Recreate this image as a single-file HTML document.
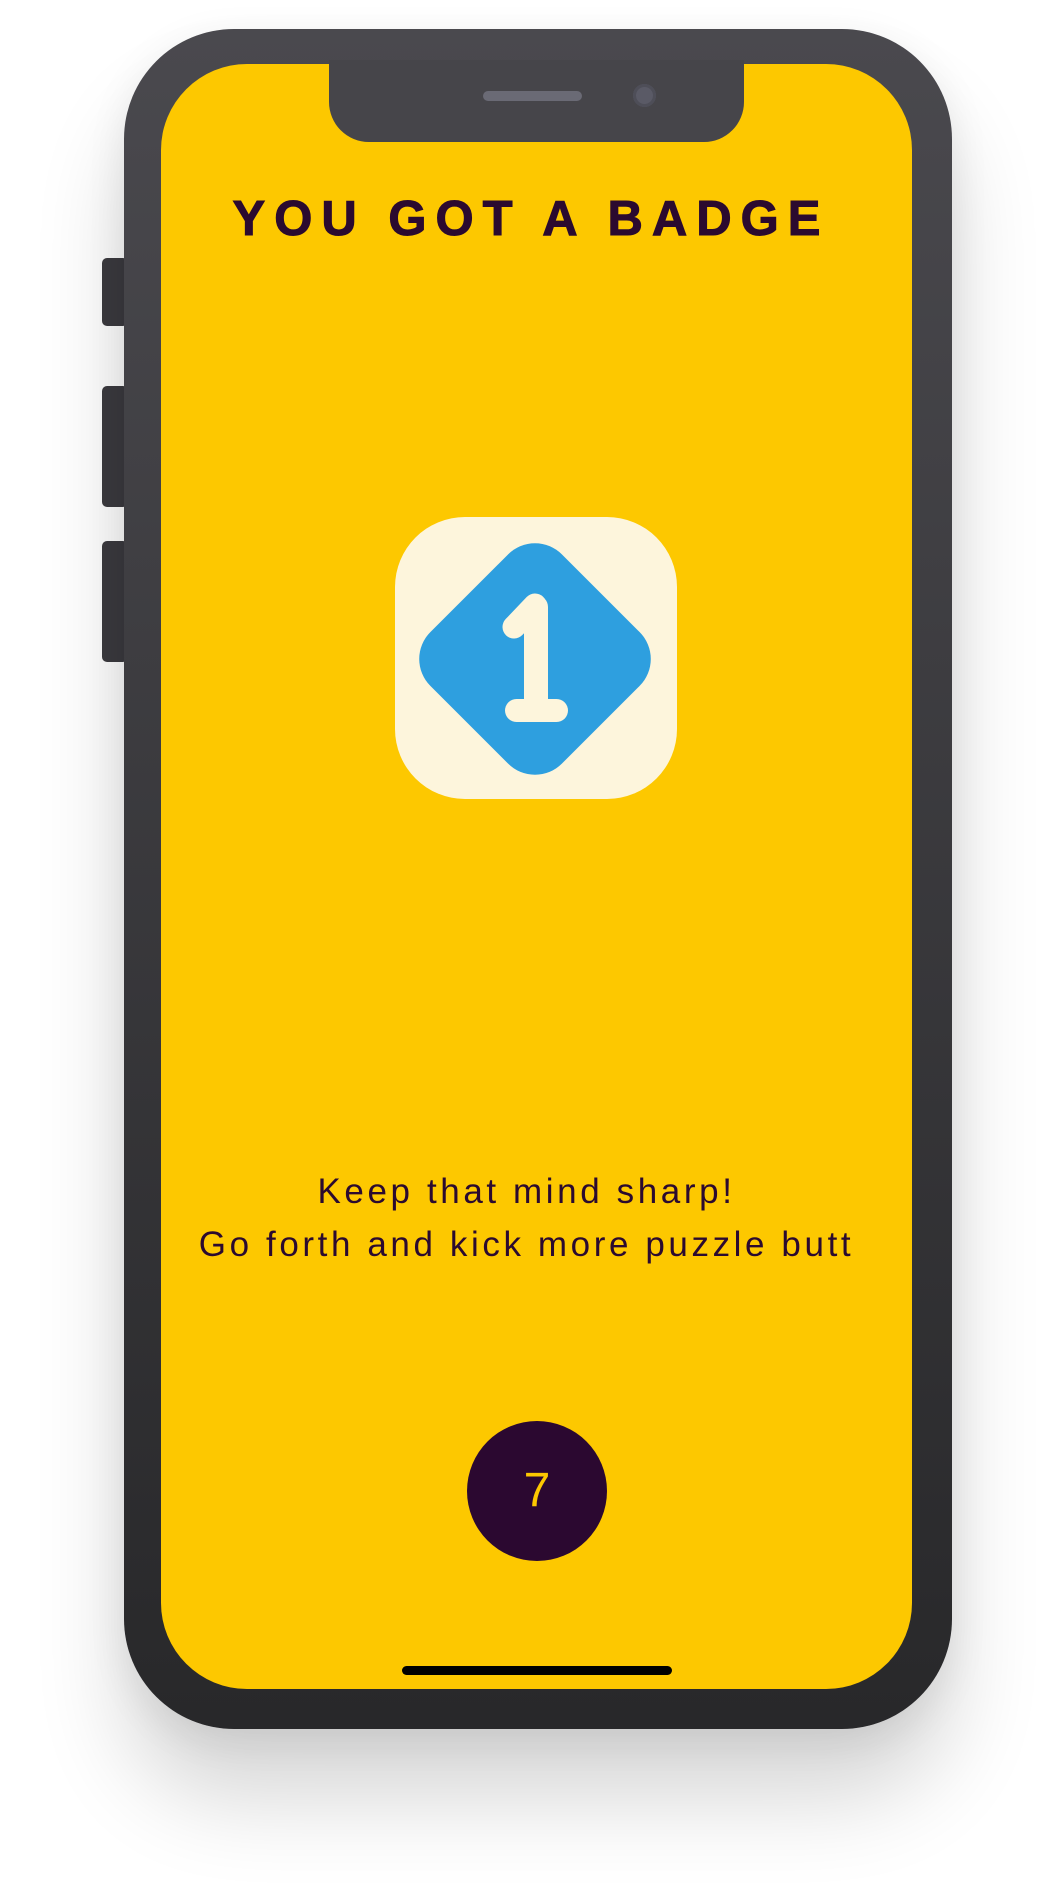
<!DOCTYPE html>
<html><head><style>
html,body{margin:0;padding:0;width:1053px;height:1903px;background:#fff;overflow:hidden;position:relative;font-family:"Liberation Sans",sans-serif}
.btn{position:absolute;left:102px;width:26px;background:#3c3b40;border-radius:5px}
.phone{position:absolute;left:124px;top:29px;width:828px;height:1700px;border-radius:110px;background:linear-gradient(#4a494e,#28282a);box-shadow:0 70px 90px rgba(0,0,0,0.16),0 10px 40px rgba(0,0,0,0.08)}
.screen{position:absolute;left:161px;top:64px;width:751px;height:1625px;border-radius:86px;background:#fdc800;overflow:hidden}
.notch{position:absolute;left:329px;top:60px;width:415px;height:82px;background:#46454a;border-radius:0 0 40px 40px}
.spk{position:absolute;left:483px;top:91px;width:99px;height:10px;border-radius:5px;background:#6a6a75}
.cam{position:absolute;left:633px;top:84px;width:23px;height:23px;border-radius:50%;background:#5a5a66;box-shadow:inset 0 0 0 3px #4e4e58}
.title{position:absolute;left:0;width:1053px;top:191px;text-align:center;font-weight:bold;font-size:49px;letter-spacing:9px;color:#2b0a2f;padding-left:9px;box-sizing:border-box;-webkit-text-stroke:1px #2b0a2f}
.msg{position:absolute;left:0;width:1053px;top:1165px;text-align:center;font-size:35px;line-height:53px;letter-spacing:3.6px;color:#2b0a2f}
.circ{position:absolute;left:467px;top:1421px;width:140px;height:140px;border-radius:50%;background:#2b0830;color:#fdc800;text-align:center;line-height:140px;font-size:48px}
.home{position:absolute;left:402px;top:1666px;width:270px;height:9px;border-radius:5px;background:#000}
</style></head><body>
<div class="btn" style="top:258px;height:68px"></div>
<div class="btn" style="top:386px;height:121px"></div>
<div class="btn" style="top:541px;height:121px"></div>
<div class="phone"></div>
<div class="screen"></div>
<div class="notch"></div>
<div class="spk"></div>
<div class="cam"></div>
<div class="title">YOU GOT A BADGE</div>
<svg style="position:absolute;left:395px;top:517px" width="282" height="282" viewBox="0 0 282 282">
<rect x="0" y="0" width="282" height="282" rx="70" fill="#fdf5dc"/>
<g transform="translate(140,142) rotate(45)">
<rect x="-93" y="-93" width="186" height="186" rx="38" fill="#2e9fdf"/>
</g>
<g fill="#fdf5dc">
<rect x="129" y="78" width="24" height="120" rx="12"/>
<rect x="110" y="182" width="63" height="23" rx="11.5"/>
</g>
<line x1="140" y1="88" x2="119" y2="110" stroke="#fdf5dc" stroke-width="23" stroke-linecap="round"/>
</svg>
<div class="msg">Keep that mind sharp!<br>Go forth and kick more puzzle butt</div>
<div class="circ">7</div>
<div class="home"></div>
</body></html>
